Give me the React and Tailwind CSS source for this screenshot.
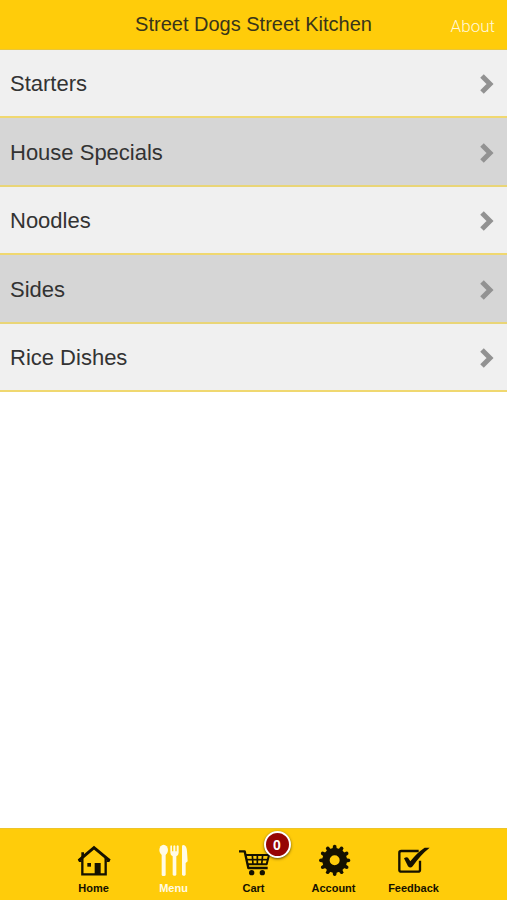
import React from "react";

const categories = ["Starters", "House Specials", "Noodles", "Sides", "Rice Dishes"];

function Icon({ children }) {
  return (
    <svg viewBox="54 75 96 96" className="size-8 overflow-visible" fill="currentColor" aria-hidden="true">
      {children}
    </svg>
  );
}

function HomeIcon() {
  return (
    <Icon>
      <g fill="none" stroke="currentColor">
        <path d="M56 122 L102 83 L149 122" strokeWidth="9" />
        <path d="M67 114 V163 H137 V114" strokeWidth="7" />
      </g>
      <path d="M64 97 H72 V106 L64 113Z" />
      <path d="M54 119 L60 114 L66 126 H57Z M151 119 L145 114 L139 126 H148Z" />
      <rect x="82" y="129" width="11" height="11" />
      <rect x="104" y="129" width="18" height="36" />
    </Icon>
  );
}

function MenuIcon() {
  return (
    <Icon>
      <ellipse cx="71" cy="90" rx="13" ry="16" />
      <rect x="65" y="98" width="12" height="70" rx="4" />
      <path d="M91 78 q3-4 5 0 V94 H100 V78 q3-4 6 0 V94 H110 V78 q3-4 6 0 V98 Q116 105 109 109 V164 q-5 7-11 0 V109 Q91 105 91 98Z" />
      <path d="M126 79 Q127 73 133 76 Q140 79 141 94 L143 124 L137 129 V164 q-5 7-11 0Z" />
    </Icon>
  );
}

function CartIcon() {
  return (
    <Icon>
      <g fill="none" stroke="currentColor" strokeWidth="6" strokeLinejoin="round">
        <path d="M57 94 H74 L85 144 H143" strokeWidth="7" />
        <path d="M77 105 H147 L140 133 H83" />
        <path d="M80 119 H143" strokeWidth="5" />
        <path d="M97 105 L99 134 M112 105 V134 M128 105 L125 134" strokeWidth="5" />
      </g>
      <circle cx="95" cy="158" r="8" />
      <circle cx="127" cy="158" r="8" />
    </Icon>
  );
}

const teeth = Array.from({ length: 12 }, (_, i) => i * 30);

function AccountIcon() {
  return (
    <Icon>
      <path
        fillRule="evenodd"
        d="M104 84 a37 37 0 1 0 0 74 a37 37 0 1 0 0-74Z M104 106 a15 15 0 1 1 0 30 a15 15 0 1 1 0-30Z"
      />
      {teeth.map((angle) => (
        <path key={angle} d="M97 92 L99 77 Q104 71 109 77 L111 92Z" transform={`rotate(${angle} 104 121)`} />
      ))}
    </Icon>
  );
}

function FeedbackIcon() {
  return (
    <Icon>
      <path
        d="M116 93 H64 Q58 93 58 98 V150 Q58 155 64 155 H114 Q120 155 120 150 V122"
        fill="none"
        stroke="currentColor"
        strokeWidth="7"
      />
      <path d="M72 115 Q80 109 84 113 L91 124 Q110 99 134 83 H149 Q121 105 98 139 Q91 146 84 139Z" />
    </Icon>
  );
}

const tabs = [
  { label: "Home", icon: HomeIcon },
  { label: "Menu", icon: MenuIcon, active: true },
  { label: "Cart", icon: CartIcon, badge: 0 },
  { label: "Account", icon: AccountIcon },
  { label: "Feedback", icon: FeedbackIcon },
];

export default function App() {
  return (
    <div className="flex min-h-screen flex-col bg-white font-['Liberation_Sans',Arial,sans-serif]">
      <header className="grid h-[50px] grid-cols-[1fr_auto_1fr] items-center border-b border-[#e9c63a] bg-[#ffcc0a] px-3">
        <h1 className="col-start-2 pb-[2px] text-[20px] leading-6 text-[#39351a]">Street Dogs Street Kitchen</h1>
        <a href="#about" className="justify-self-end pt-[2px] font-['Roboto','Liberation_Sans',sans-serif] text-[17px] leading-5 font-light text-[#fff8d8]">
          About
        </a>
      </header>

      <main className="flex-1">
        <ul>
          {categories.map((name) => (
            <li key={name} className="h-[68px] border-b-2 border-[#f0d870] bg-[#f0f0f0] even:h-[69px] even:border-[#e9d577] even:bg-[#d6d6d6]">
              <a href="#category" className="flex h-full items-center justify-between pt-[2px] pr-3 pl-[10px] text-[22px] leading-7 text-[#333]">
                {name}
                <svg viewBox="0 0 15 22" className="h-[22px] w-[15px]" fill="none" stroke="#929292" strokeWidth="5" aria-hidden="true">
                  <path d="M2 3 L10 11 L2 19" />
                </svg>
              </a>
            </li>
          ))}
        </ul>
      </main>

      <nav className="flex h-[72px] justify-center border-t border-[#edc42a] bg-[#ffcc0a]">
        {tabs.map(({ label, icon: TabIcon, active, badge }) => (
          <a
            key={label}
            href={`#${label.toLowerCase()}`}
            className={`relative flex w-20 flex-col items-center gap-[5px] pt-4 text-[11px] leading-3 font-bold ${active ? "text-[#fffbe6]" : "text-[#151100]"}`}
          >
            <TabIcon />
            {label}
            {badge !== undefined && (
              <span className="absolute top-[2px] left-[50px] flex size-[27px] items-center justify-center rounded-full border-2 border-white bg-[#960505] text-[14px] leading-4 text-white shadow-sm shadow-black/50">
                {badge}
              </span>
            )}
          </a>
        ))}
      </nav>
    </div>
  );
}
